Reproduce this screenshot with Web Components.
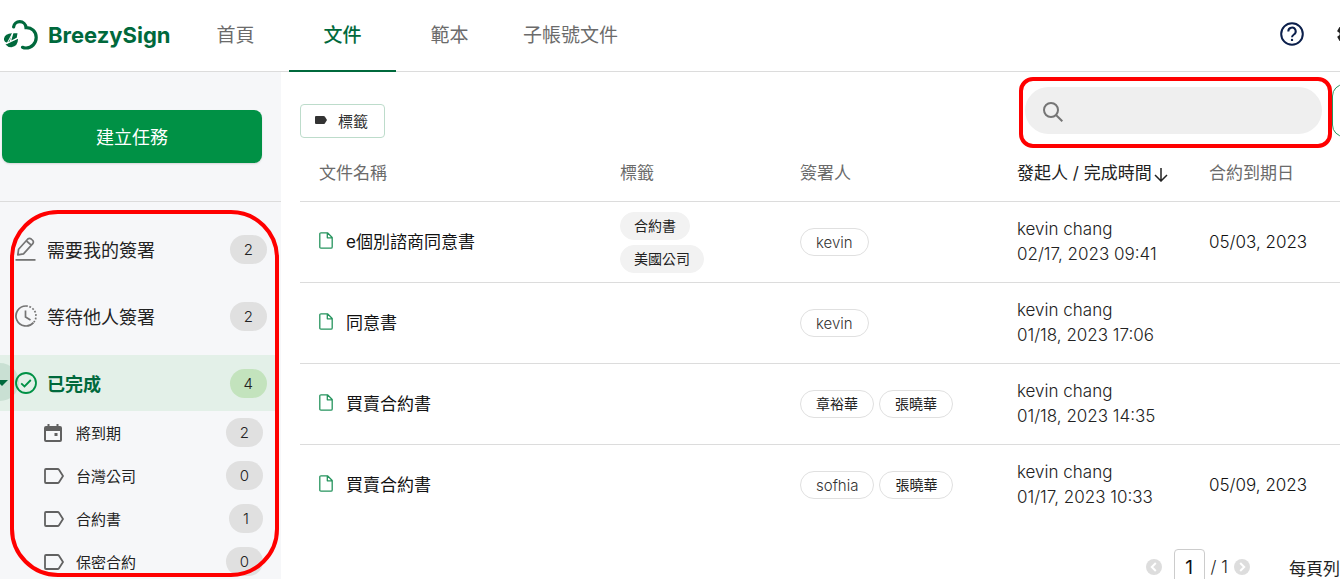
<!DOCTYPE html>
<html lang="zh-Hant">
<head>
<meta charset="utf-8">
<title>BreezySign</title>
<style>
body { margin: 0; font-family: Inter, "Noto Sans CJK TC", sans-serif; color: #222; background: #fff; }
</style>
</head>
<body>
<bs-app></bs-app>
<script>
const define = (name, html, setup) => {
  const template = document.createElement('template');
  template.innerHTML = html;
  customElements.define(name, class extends HTMLElement {
    connectedCallback() {
      if (this.shadowRoot) return;
      this.attachShadow({ mode: 'open' }).append(template.content.cloneNode(true));
      if (setup) setup(this, this.shadowRoot);
    }
  });
};

const icons = {
  logo: ['0 0 34 30', '<g fill="none" stroke="#00693c" stroke-width="3.2" stroke-linecap="round"><path d="M9.600 7C10 3.800 12.500 1.700 15.700 1.700C19 1.700 21.800 4.200 22 7.600C27.500 7.300 32.200 11.500 32.200 17.500C32.200 23.500 27.500 28 22 28Q20 28 18.500 27.300"/></g><g fill="#00693c"><path d="M8 13.200 3 22.800Q-.5 22 0 18.500Q1 13.500 8 13.200z"/><path d="M9.300 13.300h4.200l-.8 4.700-4.900 3.200-3.800 1.600z"/><path d="M14 18.800Q14 26.500 7.500 27.200Q3.500 27.200 1.500 24.500z"/></g><path stroke="#fff" stroke-width="1.200" fill="none" d="M2 23.800 14.500 17.500M8.800 13 6.300 21.500"/>'],
  help: ['0 0 24 24', '<g fill="none" stroke="#0b1f4b" stroke-width="2"><circle cx="12" cy="12" r="10.800"/><path d="M8.300 9.500a3.700 3.700 0 1 1 5.600 3C12.700 13.300 12 13.800 12 15.300"/></g><circle cx="12" cy="17.900" r="1.200" fill="#0b1f4b"/>'],
  gear: ['0 0 24 24', '<path fill="#222" fill-rule="evenodd" d="M19.400 13a7.800 7.800 0 0 0 0-2l2.100-1.600a.5.5 0 0 0 .1-.6l-2-3.500a.5.5 0 0 0-.6-.2l-2.500 1a7.400 7.400 0 0 0-1.700-1l-.4-2.600A.5.5 0 0 0 14 2h-4a.5.5 0 0 0-.5.400l-.4 2.700a7.400 7.400 0 0 0-1.700 1l-2.500-1a.5.5 0 0 0-.6.200l-2 3.500a.5.5 0 0 0 .1.600L4.600 11a7.800 7.800 0 0 0 0 2l-2.100 1.600a.5.5 0 0 0-.1.600l2 3.500c.1.200.4.300.6.200l2.500-1a7.400 7.400 0 0 0 1.700 1l.4 2.700c0 .2.200.4.500.4h4c.2 0 .5-.2.500-.4l.4-2.700a7.400 7.400 0 0 0 1.700-1l2.500 1c.2.100.5 0 .6-.2l2-3.500a.5.5 0 0 0-.1-.6zM12 15.500a3.500 3.500 0 1 1 0-7 3.500 3.500 0 0 1 0 7z"/>'],
  pen: ['0 0 22 24', '<g fill="none" stroke="#757575" stroke-width="1.700" stroke-linejoin="round"><path d="M2.800 17.800 3.600 12.200 12.800 2Q14.500.8 16.200 2L17.800 3.500Q19 5 17.800 6.700L8.500 16.800z"/><path d="M11.500 4 16.200 8.200"/></g><path stroke="#757575" stroke-width="1.800" d="M.5 22.900h20"/>'],
  clock: ['0 0 22 22', '<g fill="none" stroke="#757575" stroke-width="1.700"><path d="M11 1a10 10 0 1 0 7.500 16.600"/><path stroke-dasharray="1.800 1.600" d="M11 1a10 10 0 0 1 7.500 16.600"/><path d="M10.500 5.500v6.500l5 3"/></g>'],
  check: ['0 0 22 22', '<g fill="none" stroke="#009145" stroke-width="1.800"><circle cx="11" cy="11" r="10"/><path d="m6.200 11.300 3.300 3.200 6.300-6.500"/></g>'],
  calendar: ['0 0 18 20', '<path fill="#616161" fill-rule="evenodd" d="M3.500 1h2v2h7V1h2v2H16a2 2 0 0 1 2 2v12a2 2 0 0 1-2 2H2a2 2 0 0 1-2-2V5a2 2 0 0 1 2-2h1.500zM2 8v9h14V8zM10.500 10h3v3h-3z"/>'],
  label: ['0 0 20 16', '<path fill="none" stroke="#616161" stroke-width="1.800" stroke-linejoin="round" d="M2 1h11.500q1 0 1.500.8L19 8l-4 6.200q-.5.8-1.500.8H2Q1 15 1 14V2Q1 1 2 1z"/>'],
  tag: ['0 0 12 8', '<path fill="#333" d="M1 0h7.500q.8 0 1.300.6L12 4 9.800 7.400Q9.300 8 8.500 8H1Q0 8 0 7V1Q0 0 1 0z"/>'],
  search: ['0 0 20 20', '<g fill="none" stroke="#757575" stroke-width="2"><circle cx="8" cy="8" r="7"/><path d="m13 13 6.300 6.300"/></g>'],
  file: ['0 0 14 17', '<path fill="none" stroke="#26945e" stroke-width="1.300" stroke-linejoin="round" d="M2 .8h6.500l4.700 4.700V15q0 1.200-1.200 1.200H2Q.8 16.200.8 15V2Q.8.8 2 .8zM8.300.8v5h5"/>'],
  down: ['0 0 14 14', '<path fill="none" stroke="#222" stroke-width="1.500" d="M7 0v13M1 7l6 6 6-6"/>'],
  prev: ['0 0 16 16', '<circle cx="8" cy="8" r="8" fill="#ddd"/><path fill="none" stroke="#fff" stroke-width="2" d="M9.800 4 5.800 8l4 4"/>'],
  next: ['0 0 16 16', '<circle cx="8" cy="8" r="8" fill="#ddd"/><path fill="none" stroke="#fff" stroke-width="2" d="m6.200 4 4 4-4 4"/>']
};

define('bs-icon', `<style>:host { display: block; flex: none; } svg { display: block; }</style>`, (el, root) => {
  const [box, body] = icons[el.getAttribute('name')];
  const [, , w, h] = box.split(' ');
  root.innerHTML += `<svg aria-hidden="true" viewBox="${box}" width="${w}" height="${h}">${body}</svg>`;
});

define('bs-tab', `<style>
:host { display: flex; min-width: 107px; }
a { flex: 1; box-sizing: border-box; padding: 2px 20px 0; text-align: center; font-size: 19px; line-height: 68px; color: #6b6b6b; text-decoration: none; border-bottom: 2px solid transparent; }
:host([active]) a { color: #00693c; border-color: #00693c; font-weight: 500; }
</style><a href="#"><slot></slot></a>`);

define('bs-header', `<style>
:host { display: flex; height: 71px; border-bottom: 1px solid #dcdcdc; }
.brand { display: flex; align-items: center; gap: 10px; box-sizing: border-box; width: 182px; padding: 0 0 2px 4px; color: #00693c; font-size: 22px; font-weight: 700; text-decoration: none; }
nav { display: flex; margin-bottom: -1px; }
.tools { display: flex; align-items: center; gap: 31px; margin: 0 -19px 4px auto; }
button { padding: 0; border: 0; background: none; }
</style>
<a class="brand" href="#"><bs-icon name="logo"></bs-icon><span>BreezySign</span></a>
<nav><bs-tab>首頁</bs-tab><bs-tab active>文件</bs-tab><bs-tab>範本</bs-tab><bs-tab>子帳號文件</bs-tab></nav>
<div class="tools"><button aria-label="說明"><bs-icon name="help"></bs-icon></button><button aria-label="設定"><bs-icon name="gear"></bs-icon></button></div>`);

define('bs-side-item', `<style>
:host { display: block; position: relative; }
a { position: relative; z-index: 1; display: flex; align-items: center; height: 56px; padding: 0 9px 0 15px; color: #222; font-size: 18px; text-decoration: none; }
.icon { width: 32px; }
.count { margin-left: auto; padding: 0 14px; border-radius: 15px; background: #e0e0e0; font-size: 15px; line-height: 29px; font-weight: 300; }
:host([active]) { background: #e3f0e8; }
:host([active]) .text { color: #00693c; font-weight: 700; }
:host([active]) .count { background: #c3e3bd; }
:host([sub]) a { height: 43px; padding: 0 13px 0 44px; font-size: 15px; }
</style><slot name="toggle"></slot><a href="#"><span class="icon"></span><span class="text"><slot></slot></span><span class="count"></span></a>`, (el, root) => {
  const icon = document.createElement('bs-icon');
  icon.setAttribute('name', el.getAttribute('icon'));
  root.querySelector('.icon').append(icon);
  root.querySelector('.count').textContent = el.getAttribute('count');
});

define('bs-sidebar', `<style>
:host { display: block; box-sizing: border-box; position: relative; width: 281px; flex: none; background: #f6f7f9; overflow: hidden; }
.create { padding: 38px 19px 38px 2px; border-bottom: 1px solid #dcdcdc; }
.create button { display: block; width: 100%; height: 53px; padding: 0 0 2px; border: 0; border-radius: 8px; background: #009145; color: #fff; font: inherit; font-size: 18px; box-shadow: 0 1px 2px #0002; }
nav { padding: 19px 5px 0 0; }
.main { display: grid; gap: 11px; }
.toggle { position: absolute; left: -19px; top: 8px; width: 38px; height: 38px; padding: 0; border: 0; border-radius: 50%; background: #c9e0d3; }
.toggle::after { content: ""; position: absolute; left: 15px; top: 17px; border: 6px solid transparent; border-top-color: #00693c; }
.mark { position: absolute; z-index: 2; inset: 138px 2px 2px 10px; border: 4px solid #f00; border-radius: 48px; pointer-events: none; }
</style>
<div class="create"><button>建立任務</button></div>
<nav>
<div class="main">
<bs-side-item icon="pen" count="2">需要我的簽署</bs-side-item>
<bs-side-item icon="clock" count="2">等待他人簽署</bs-side-item>
<bs-side-item icon="check" count="4" active>已完成<button slot="toggle" class="toggle" aria-label="收合"></button></bs-side-item>
</div>
<bs-side-item sub icon="calendar" count="2">將到期</bs-side-item>
<bs-side-item sub icon="label" count="0">台灣公司</bs-side-item>
<bs-side-item sub icon="label" count="1">合約書</bs-side-item>
<bs-side-item sub icon="label" count="0">保密合約</bs-side-item>
</nav>
<div class="mark"></div>`);

define('bs-chip', `<style>
:host { display: block; box-sizing: border-box; width: max-content; height: 28px; padding: 0 15px; border: 1px solid #e0e0e0; border-radius: 14px; font-size: 15px; line-height: 27px; font-weight: 300; color: #333; }
:host([filled]) { padding: 0 13px; background: #f2f2f2; border-color: #f2f2f2; font-size: 14px; line-height: 26px; color: #222; }
:host([cjk]) { font-size: 14px; line-height: 26px; color: #222; }
:host([filled]), :host([cjk]) { font-weight: 400; }
</style><slot></slot>`);

define('bs-toolbar', `<style>
:host { display: flex; align-items: center; height: 53px; }
.tag { display: flex; align-items: center; gap: 11px; box-sizing: border-box; height: 34px; margin-top: 20px; padding: 0 16px 1px 14px; border: 1px solid #bddccb; border-radius: 4px; background: #fff; color: #333; font: inherit; font-size: 15px; }
.search { position: relative; display: flex; align-items: center; gap: 12px; box-sizing: border-box; width: 297px; height: 47px; margin: 0 10px 0 auto; padding: 2px 18px 0; border-radius: 24px; background: #efefef; }
input { flex: 1; min-width: 0; border: 0; background: none; font: inherit; font-size: 17px; outline: 0; }
.mark { position: absolute; z-index: 1; inset: -10px -10px -14px -6px; border: 4px solid #f00; border-radius: 14px; pointer-events: none; }
.more { width: 48px; height: 53px; margin-right: -40px; border: 1px solid #26945e; border-radius: 12px; background: #fff; }
</style>
<button class="tag"><bs-icon name="tag"></bs-icon>標籤</button>
<label class="search"><bs-icon name="search"></bs-icon><input type="search" aria-label="搜尋"><span class="mark"></span></label>
<button class="more" aria-label="更多"></button>`);

const rows = [
  ['e個別諮商同意書', ['合約書', '美國公司'], ['kevin'], '02/17, 2023 09:41', '05/03, 2023'],
  ['同意書', [], ['kevin'], '01/18, 2023 17:06', ''],
  ['買賣合約書', [], ['章裕華', '張曉華'], '01/18, 2023 14:35', ''],
  ['買賣合約書', [], ['sofhia', '張曉華'], '01/17, 2023 10:33', '05/09, 2023']
];

define('bs-documents', `<style>
:host { display: block; }
table { width: 100%; table-layout: fixed; border-collapse: collapse; font-size: 17px; line-height: 25px; }
th, td { box-sizing: border-box; padding: 0 0 0 19px; text-align: left; white-space: nowrap; }
th { height: 64px; padding-top: 10px; font-weight: 400; color: #6b6b6b; }
td { height: 81px; padding-top: 1px; }
tr { border-bottom: 1px solid #dcdcdc; }
tbody tr:last-child { border: 0; }
th.sorted { color: #222; }
.sorted bs-icon { display: inline-block; margin-left: 2px; vertical-align: -3px; }
.name { display: flex; align-items: center; gap: 13px; color: #111; }
.name bs-icon { margin-bottom: 4px; }
.tags { display: grid; gap: 5px; }
.signers { display: flex; gap: 5px; }
.by { color: #222; font-weight: 300; }
.due { color: #111; font-weight: 300; }
</style>
<table><colgroup><col><col style="width:180px"><col style="width:217px"><col style="width:192px"><col style="width:150px"></colgroup>
<thead><tr><th>文件名稱</th><th>標籤</th><th>簽署人</th><th class="sorted">發起人 / 完成時間<bs-icon name="down"></bs-icon></th><th>合約到期日</th></tr></thead><tbody></tbody></table>`, (el, root) => {
  root.querySelector('tbody').innerHTML = rows.map(([name, tags, signers, time, due]) => `<tr>
<td><div class="name"><bs-icon name="file"></bs-icon><span>${name}</span></div></td>
<td><div class="tags">${tags.map(t => `<bs-chip filled>${t}</bs-chip>`).join('')}</div></td>
<td><div class="signers">${signers.map(s => `<bs-chip${/[a-z]/.test(s) ? '' : ' cjk'}>${s}</bs-chip>`).join('')}</div></td>
<td class="by">kevin chang<br>${time}</td><td class="due">${due}</td></tr>`).join('');
});

define('bs-pager', `<style>
:host { display: flex; justify-content: flex-end; align-items: center; margin-top: 24px; font-size: 17px; white-space: nowrap; }
button { padding: 0; border: 0; background: none; }
input { box-sizing: border-box; width: 31px; height: 36px; margin: 0 6px 0 12px; padding: 0; border: 1px solid #ccc; border-radius: 4px; text-align: center; font: inherit; font-size: 19px; color: #111; }
.total { font-weight: 300; }
.next { margin: 0 39px 0 6px; }
</style>
<button aria-label="上一頁"><bs-icon name="prev"></bs-icon></button><input aria-label="頁碼" value="1"><span class="total">/ 1</span><button class="next" aria-label="下一頁"><bs-icon name="next"></bs-icon></button><span>每頁列</span>`);

define('bs-app', `<style>
:host { display: flex; flex-direction: column; height: 100vh; overflow: hidden; }
.body { display: flex; flex: 1; min-height: 0; }
main { flex: 1; min-width: 0; padding: 12px 0 0 19px; }
</style>
<bs-header></bs-header>
<div class="body"><bs-sidebar></bs-sidebar><main><bs-toolbar></bs-toolbar><bs-documents></bs-documents><bs-pager></bs-pager></main></div>`);
</script>
</body>
</html>
